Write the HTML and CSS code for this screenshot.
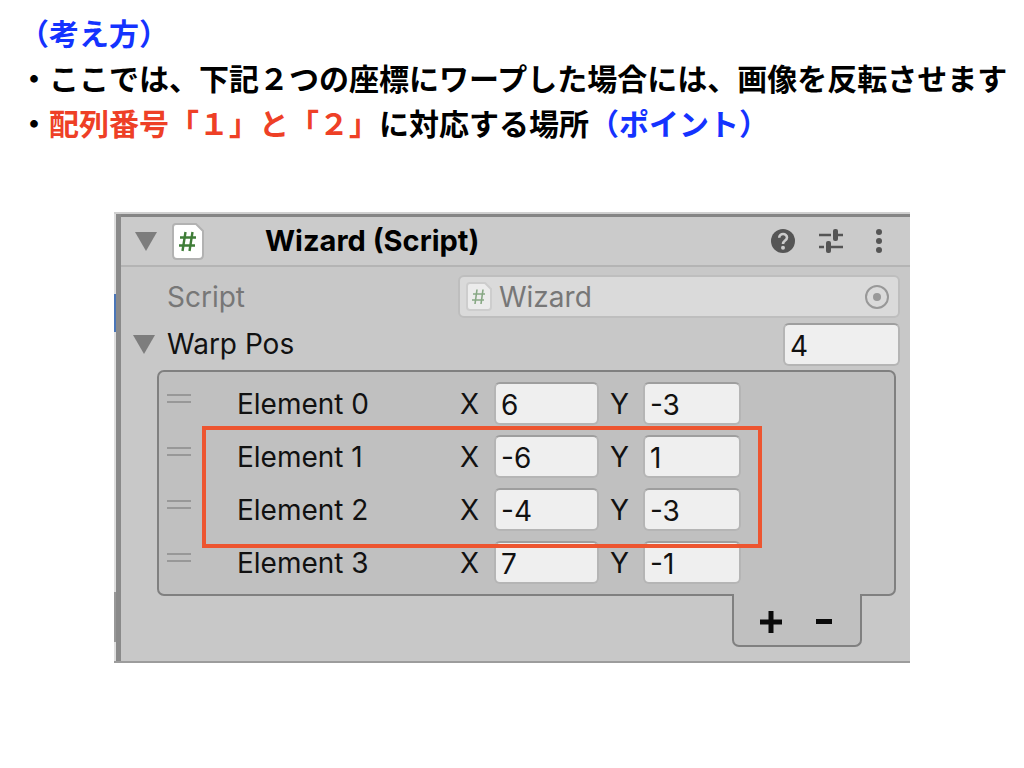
FILE: index.html
```
<!DOCTYPE html>
<html lang="ja">
<head>
<meta charset="utf-8">
<title>Wizard (Script)</title>
<link rel="stylesheet" href="styles.css">
</head>
<body>
<header class="notes">
  <p class="blue">（考え方）</p>
  <p>・ここでは、下記２つの座標にワープした場合には、画像を反転させます</p>
  <p>・<span class="red">配列番号「１」と「２」</span>に対応する場所<span class="blue">（ポイント）</span></p>
</header>

<main class="inspector">
  <div class="component-bar">
    <button class="fold" aria-label="Fold component"><svg width="22" height="19" viewBox="0 0 22 19"><path d="M0 0H22L11 19Z" fill="#7d7d7d"/></svg></button>
    <svg class="file-icon" width="34" height="39" viewBox="0 0 34 39"><path d="M5 2H25L32 9V33Q32 37 28 37H6Q2 37 2 33V5Q2 2 5 2Z" fill="#fff" stroke="#b2b2b2" stroke-width="2"/><path d="M14.500 10L11.500 29M21.500 10L18.500 29M9 15.500H25M8 23.500H24" fill="none" stroke="#3f7d38" stroke-width="2.400"/></svg>
    <h1 class="title">Wizard (Script)</h1>
    <div class="tools">
      <button aria-label="Help"><svg width="24" height="24" viewBox="0 0 24 24"><circle cx="12" cy="12" r="12" fill="#555"/><path d="M8.200 8.800C8.200 3.800 16 3.800 16 8.600C16 11.600 12 11.600 12 15" fill="none" stroke="#cbcbcb" stroke-width="2.600"/><circle cx="12" cy="18.800" r="2" fill="#cbcbcb"/></svg></button>
      <button aria-label="Presets"><svg width="24" height="24" viewBox="0 0 24 24"><path d="M0 6H12M19 6H24M0 18H5M12 18H24" stroke="#555" stroke-width="2.400"/><rect x="14" y="0" width="5" height="12" rx="2" fill="#555"/><rect x="7" y="12" width="5" height="12" rx="2" fill="#555"/></svg></button>
      <button aria-label="More"><svg width="24" height="24" viewBox="0 0 24 24"><g fill="#555"><circle cx="12" cy="3" r="3"/><circle cx="12" cy="12" r="3"/><circle cx="12" cy="21" r="3"/></g></svg></button>
    </div>
  </div>

  <div class="fields">
    <div class="field script-field">
      <span class="name">Script</span>
      <button class="object" disabled>
        <svg width="26" height="29" viewBox="0 0 26 29"><path d="M4 1H19L25 7V25Q25 28 22 28H4Q1 28 1 25V4Q1 1 4 1Z" fill="#ececec" stroke="#cdcdcd" stroke-width="2"/><path d="M11 7.500L9 22M17 7.500L15 22M7 12H19M6 18H18" fill="none" stroke="#87a884" stroke-width="1.600"/></svg>
        <span class="object-name">Wizard</span>
        <svg width="24" height="24" viewBox="0 0 24 24"><circle cx="12" cy="12" r="11" fill="none" stroke="#989898" stroke-width="2"/><circle cx="12" cy="12" r="4" fill="#989898"/></svg>
      </button>
    </div>
    <div class="field size-field">
      <button class="fold" aria-label="Fold Warp Pos"><svg width="22" height="19" viewBox="0 0 22 19"><path d="M0 0H22L11 19Z" fill="#7d7d7d"/></svg></button>
      <label class="name" for="size">Warp Pos</label>
      <input class="box" id="size" type="text" value="4">
    </div>

    <div class="list">
      <div class="item"><i class="grip"></i><span>Element 0</span><label for="x0">X</label><input class="box" id="x0" type="text" value="6"><label class="y" for="y0">Y</label><input class="box" id="y0" type="text" value="-3"></div>
      <div class="item"><i class="grip"></i><span>Element 1</span><label for="x1">X</label><input class="box" id="x1" type="text" value="-6"><label class="y" for="y1">Y</label><input class="box" id="y1" type="text" value="1"></div>
      <div class="item"><i class="grip"></i><span>Element 2</span><label for="x2">X</label><input class="box" id="x2" type="text" value="-4"><label class="y" for="y2">Y</label><input class="box" id="y2" type="text" value="-3"></div>
      <div class="item"><i class="grip"></i><span>Element 3</span><label for="x3">X</label><input class="box" id="x3" type="text" value="7"><label class="y" for="y3">Y</label><input class="box" id="y3" type="text" value="-1"></div>
      <div class="highlight"></div>
    </div>
    <div class="list-footer">
      <button aria-label="Add element"><svg width="22" height="22" viewBox="0 0 22 22"><path d="M0 11H22M11 0V22" stroke="#0a0a0a" stroke-width="5"/></svg></button>
      <button aria-label="Remove element"><svg width="16" height="22" viewBox="0 0 16 22"><path d="M0 10.500H16" stroke="#0a0a0a" stroke-width="5"/></svg></button>
    </div>
  </div>
</main>
</body>
</html>
```
FILE: styles.css
```
* { box-sizing: border-box; }

body {
  margin: 0;
  background: #fff;
  color: #000;
  font-family: Inter, "Liberation Sans", sans-serif;
}

button {
  display: flex;
  padding: 0;
  border: 0;
  background: none;
}

svg { display: block; flex: none; }

.notes {
  padding: 10px 0 0 19px;
  font: bold 30px/45px "Noto Sans CJK JP", sans-serif;
  white-space: nowrap;
}
.notes p { margin: 0; }
.blue { color: #1433ff; }
.red { color: #ee4026; }

.inspector {
  position: relative;
  margin: 67px 114px 40px;
  padding-left: 7px;
  border-top: 2px solid #d0d0d0;
  border-bottom: 2px solid #9c9c9c;
  background: linear-gradient(to right, #dedede 2px, #8a8a8a 2px, #8a8a8a 7px, #c8c8c8 7px);
  font-size: 28px;
  line-height: 40px;
}
.inspector::before,
.inspector::after {
  content: "";
  position: absolute;
  left: 0;
  width: 2px;
}
.inspector::before { top: 80px; height: 38px; background: #4a76b8; }
.inspector::after { top: 378px; height: 50px; background: #999; }

.component-bar {
  display: flex;
  align-items: center;
  height: 53px;
  padding: 0 19px 0 14px;
  border-top: 3px solid #858585;
  border-bottom: 2px solid #b4b4b4;
  background: #cbcbcb;
}
.file-icon { margin-left: 14px; }
.title {
  margin: 0 0 0 60px;
  font-size: 29px;
  font-weight: 700;
}
.tools {
  display: flex;
  gap: 24px;
  margin-left: auto;
}

.fields { padding: 8px 10px 14px 12px; }

.field {
  display: flex;
  align-items: center;
  margin-bottom: 5px;
}
.name { color: #111; }
.size-field { margin-bottom: 4px; }
.size-field .name { margin: 0 auto 2px 12px; }
.size-field .box { width: 117px; }
.script-field .name {
  width: 325px;
  padding-left: 34px;
  color: #777;
}

.object {
  display: flex;
  flex: 1;
  align-items: center;
  height: 43px;
  padding: 0 9px 0 6px;
  border: 2px solid #bebebe;
  border-radius: 6px;
  background: #dadada;
  color: #777;
  font: inherit;
}
.object-name { margin: 0 auto 0 7px; }

.box {
  width: 100%;
  height: 43px;
  padding: 2px 0 0 5px;
  border: 2px solid #b5b5b5;
  border-top-color: #9e9e9e;
  border-radius: 6px;
  background: #efefef;
  color: #111;
  font: inherit;
}

.list {
  position: relative;
  display: grid;
  gap: 10px;
  margin: 0 4px 0 24px;
  padding: 10px 8px;
  border: 2px solid #808080;
  border-radius: 7px;
  background: #c0c0c0;
  color: #111;
}
.item {
  display: grid;
  grid-template-columns: 70px 223px 34px 105px 44px 98px;
  align-items: center;
}
.item .y { padding-left: 11px; }
.grip {
  width: 24px;
  height: 9px;
  margin-bottom: 10px;
  border: solid #989898;
  border-width: 2px 0;
}
.highlight {
  position: absolute;
  top: 54px;
  left: 43px;
  width: 560px;
  height: 122px;
  border: 4px solid #ed5530;
}

.list-footer {
  position: relative;
  display: flex;
  align-items: center;
  justify-content: center;
  gap: 34px;
  width: 130px;
  height: 53px;
  margin: -2px 38px 0 auto;
  padding: 5px 3px 0 0;
  border: 2px solid #808080;
  border-top: 0;
  border-radius: 0 0 7px 7px;
  background: #c0c0c0;
}
```
